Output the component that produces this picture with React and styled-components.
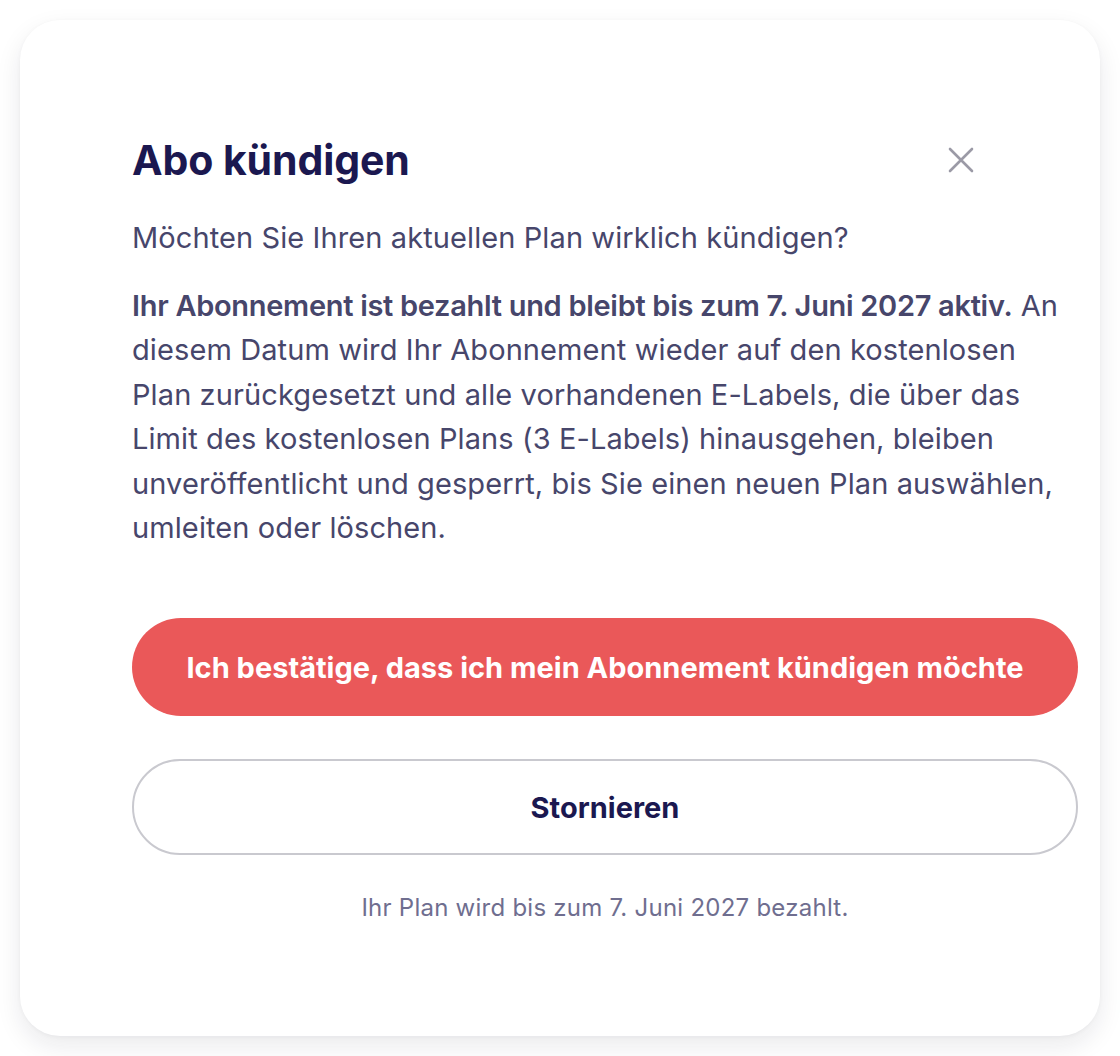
import React from 'react'
import styled, { createGlobalStyle } from 'styled-components'

const Global = createGlobalStyle`
  html, body {
    margin: 0;
    padding: 0;
    background: #ffffff;
  }
  body {
    font-family: 'Inter', 'Noto Sans', sans-serif;
    -webkit-font-smoothing: antialiased;
  }
`

const Page = styled.div`
  padding: 20px;
  box-sizing: border-box;
  width: 1120px;
  height: 1056px;
`

const Card = styled.div`
  background: #fff;
  border-radius: 40px;
  box-shadow: 0 10px 26px rgba(20, 20, 40, 0.09), 0 1px 4px rgba(20, 20, 40, 0.04);
  height: 1016px;
  box-sizing: border-box;
  padding: 116px 22px 0 112px;
  display: flex;
  flex-direction: column;
`

const Header = styled.div`
  display: flex;
  align-items: center;
  justify-content: space-between;
  padding-right: 104px;
  height: 48px;
`

const Title = styled.h2`
  margin: 0;
  font-size: 41px;
  font-weight: 700;
  letter-spacing: -0.1px;
  color: #1b1850;
  line-height: 48px;
`

const Close = styled.button`
  border: 0;
  background: none;
  padding: 0;
  width: 26px;
  height: 26px;
  display: flex;
  cursor: pointer;
`

const Lead = styled.p`
  margin: 32px 0 0;
  font-size: 29px;
  line-height: 44px;
  color: #47466b;
  letter-spacing: 0.1px;
`

const Body = styled(Lead)`
  margin-top: 24px;
  line-height: 44.4px;
  strong {
    font-weight: 600;
    letter-spacing: -0.3px;
  }
`

const Actions = styled.div`
  display: flex;
  flex-direction: column;
  gap: 43px;
  margin-top: 68px;
`

const Button = styled.button`
  font-family: inherit;
  height: ${p => (p.$danger ? 98 : 96)}px;
  border-radius: 49px;
  font-size: 29px;
  font-weight: 700;
  letter-spacing: 0;
  cursor: pointer;
  background: ${p => (p.$danger ? '#ea5859' : '#fff')};
  color: ${p => (p.$danger ? '#fff' : '#1b1850')};
  border: ${p => (p.$danger ? '0' : '2px solid #c9c9cf')};
`

const Note = styled.p`
  margin: 38px 0 0;
  text-align: center;
  font-size: 24px;
  line-height: 30px;
  color: #6f6e8f;
  letter-spacing: 0.25px;
`

export default function App() {
  return (
    <Page>
      <Global />
      <Card>
        <Header>
          <Title>Abo kündigen</Title>
          <Close aria-label="Schließen">
            <svg width="26" height="26" viewBox="0 0 26 26" fill="none">
              <path d="M2 2L24 24M24 2L2 24" stroke="#9b9aa6" strokeWidth="2.6" strokeLinecap="round" />
            </svg>
          </Close>
        </Header>
        <Lead>Möchten Sie Ihren aktuellen Plan wirklich kündigen?</Lead>
        <Body>
          <strong>Ihr Abonnement ist bezahlt und bleibt bis zum 7. Juni 2027 aktiv.</strong> An diesem
          Datum wird Ihr Abonnement wieder auf den kostenlosen Plan zurückgesetzt und alle vorhandenen
          E-Labels, die über das Limit des kostenlosen Plans (3 E-Labels) hinausgehen, bleiben
          unveröffentlicht und gesperrt, bis Sie einen neuen Plan auswählen, umleiten oder löschen.
        </Body>
        <Actions>
          <Button $danger>Ich bestätige, dass ich mein Abonnement kündigen möchte</Button>
          <Button>Stornieren</Button>
        </Actions>
        <Note>Ihr Plan wird bis zum 7. Juni 2027 bezahlt.</Note>
      </Card>
    </Page>
  )
}
